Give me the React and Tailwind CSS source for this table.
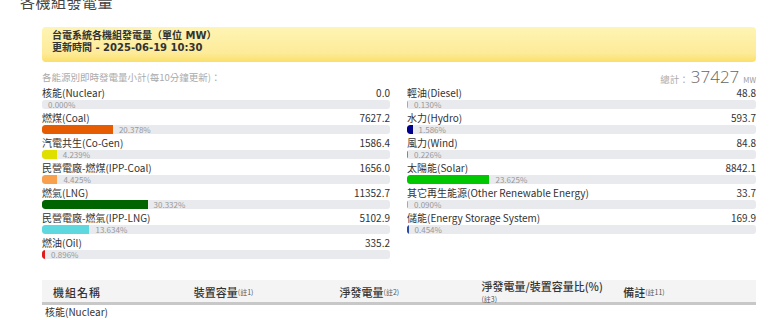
const leftRows = [
  { name: '核能(Nuclear)', value: '0.0', pct: 0, color: '#cccccc' },
  { name: '燃煤(Coal)', value: '7627.2', pct: 20.378, color: '#e65c00' },
  { name: '汽電共生(Co-Gen)', value: '1586.4', pct: 4.239, color: '#dfe000' },
  { name: '民營電廠-燃煤(IPP-Coal)', value: '1656.0', pct: 4.425, color: '#f8a04c' },
  { name: '燃氣(LNG)', value: '11352.7', pct: 30.332, color: '#006400' },
  { name: '民營電廠-燃氣(IPP-LNG)', value: '5102.9', pct: 13.634, color: '#5cd8de' },
  { name: '燃油(Oil)', value: '335.2', pct: 0.896, color: '#e01b1b' },
]

const rightRows = [
  { name: '輕油(Diesel)', value: '48.8', pct: 0.13, color: '#a8a8a8' },
  { name: '水力(Hydro)', value: '593.7', pct: 1.586, color: '#00008b' },
  { name: '風力(Wind)', value: '84.8', pct: 0.226, color: '#5f9a7c' },
  { name: '太陽能(Solar)', value: '8842.1', pct: 23.625, color: '#00c800' },
  { name: '其它再生能源(Other Renewable Energy)', value: '33.7', pct: 0.09, color: '#a8a8a8' },
  { name: '儲能(Energy Storage System)', value: '169.9', pct: 0.454, color: '#2b4aa8' },
]

const cjk = { fontFamily: '"Noto Sans CJK TC", sans-serif' }

const EnergyRow = ({ row }) => (
  <div className="h-[25px]">
    <div className="flex justify-between items-center h-[15px] text-[10px] leading-[15px] text-[#333]">
      <span>{row.name}</span>
      <span>{row.value}</span>
    </div>
    <div className="flex items-center h-[9px] rounded-[3px] bg-[#e8eaed] overflow-hidden">
      <div
        className="h-full rounded-l-[3px] shrink-0"
        style={{ width: row.pct > 0 ? `max(1px, ${row.pct}%)` : 0, backgroundColor: row.color }}
      />
      <span className="ml-[6px] text-[8px] leading-none text-[#999]">{row.pct.toFixed(3)}%</span>
    </div>
  </div>
)

const Note = ({ children }) => (
  <span className="text-[7px] font-normal text-[#555]">{children}</span>
)

export default function App() {
  return (
    <div className="w-[780px] h-[320px] overflow-hidden bg-white" style={cjk}>
      <div className="ml-[20px] -mt-[6px] text-[15px] leading-[15px] tracking-[0.5px] text-[#444]">
        各機組發電量
      </div>

      <div className="ml-[42px] w-[714px] mt-[18px] h-[35px] rounded-[4px] px-[10px] pt-[3px] bg-gradient-to-b from-[#fef4b4] via-[#fdeb98] via-75% to-[#fbdf68]">
        <div
          className="text-[10px] leading-[12px] font-bold text-[#333]"
          style={{ fontFamily: '"DejaVu Sans", "Noto Sans CJK TC", sans-serif' }}
        >
          <div>台電系統各機組發電量（單位 MW）</div>
          <div>更新時間 - 2025-06-19 10:30</div>
        </div>
      </div>

      <div className="ml-[42px] w-[714px] mt-[7px] grid grid-cols-[348px_349px] gap-x-[17px]">
        <div>
          <div className="h-[16px] text-[9.5px] leading-[16px] text-[#aaa]">
            各能源別即時發電量小計(每10分鐘更新)：
          </div>
          {leftRows.map((r) => (
            <EnergyRow key={r.name} row={r} />
          ))}
        </div>
        <div>
          <div className="h-[16px] flex justify-end items-baseline text-[#888]">
            <span className="text-[9.5px] text-[#aaa]">總計：</span>
            <span
              className="text-[17px] leading-[16px] font-light text-[#666] ml-[2px]"
              style={{ fontFamily: '"Open Sans", sans-serif' }}
            >
              37427
            </span>
            <span className="text-[7.5px] ml-[4px] text-[#999]">MW</span>
          </div>
          {rightRows.map((r) => (
            <EnergyRow key={r.name} row={r} />
          ))}
        </div>
      </div>

      <div className="ml-[42px] w-[714px] mt-[20px]">
        <div className="grid grid-cols-5 h-[25px] bg-[#f4f4f4] border-b-[3px] border-[#c8c8c8] text-[11px] font-medium text-[#333]">
          <div className="pl-[11px] flex items-center tracking-[1px]">機組名稱</div>
          <div className="pl-[9px] flex items-center">
            裝置容量<Note>(註1)</Note>
          </div>
          <div className="pl-[12px] flex items-center">
            淨發電量<Note>(註2)</Note>
          </div>
          <div className="pl-[11px] flex flex-col justify-center leading-[13px]">
            <span>淨發電量/裝置容量比(%)</span>
            <span className="leading-[9px]"><Note>(註3)</Note></span>
          </div>
          <div className="pl-[10px] flex items-center">
            備註<Note>(註11)</Note>
          </div>
        </div>
        <div className="pl-[3px] text-[10px] leading-[14px] text-[#333]">核能(Nuclear)</div>
      </div>
    </div>
  )
}
